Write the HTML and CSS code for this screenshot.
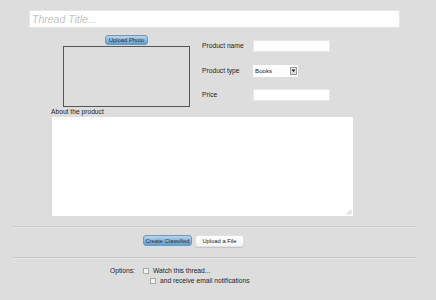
FILE: index.html
```html
<!DOCTYPE html>
<html>
<head>
<meta charset="utf-8">
<link rel="stylesheet" href="styles.css">
</head>
<body>
<div class="page">
  <div class="title-row"><div class="title-input">Thread Title...</div></div>
  <div class="product">
    <div class="photo">
      <div class="btn btn-blue btn-photo">Upload Photo</div>
      <div class="photo-box"></div>
    </div>
    <div class="fields">
      <div class="label">Product name</div>
      <div class="text-input"></div>
      <div class="label">Product type</div>
      <div class="select"><span class="select-value">Books</span><span class="select-arrow"><svg width="5" height="5" viewBox="0 0 5 5"><path d="M0.5 1.5 L4.5 1.5 L2.5 4 Z" fill="#111"/></svg></span></div>
      <div class="label">Price</div>
      <div class="text-input"></div>
    </div>
  </div>
  <div class="about-label">About the product</div>
  <div class="textarea">
    <svg class="grip" width="6" height="6" viewBox="0 0 6 6"><path d="M5.5 1 L1 5.5 M5.5 3.5 L3.5 5.5" stroke="#aaa" stroke-width="0.8"/></svg>
  </div>
  <div class="sep sep-1"></div>
  <div class="actions">
    <div class="btn btn-blue btn-create">Create Classified</div>
    <div class="btn btn-white btn-file">Upload a File</div>
  </div>
  <div class="sep sep-2"></div>
  <div class="options">
    <div class="options-label">Options:</div>
    <div class="option-list">
      <div class="option"><span class="check"></span><span>Watch this thread...</span></div>
      <div class="option sub"><span class="check"></span><span>and receive email notifications</span></div>
    </div>
  </div>
</div>
</body>
</html>
```
FILE: styles.css
```css
html, body {
  margin: 0;
  padding: 0;
  background: #dddddd;
  font-family: "Liberation Sans", Arial, sans-serif;
  font-size: 6.7px;
  color: #1e1e1e;
}
.page {
  width: 436px;
  height: 300px;
  padding-top: 10px;
  box-sizing: border-box;
}
.title-row {
  padding-left: 29px;
}
.title-input {
  width: 371px;
  height: 18px;
  box-sizing: border-box;
  background: #fff;
  border: 1px solid #e6e6e6;
  border-radius: 1px;
  font-style: italic;
  font-size: 10.5px;
  line-height: 16px;
  color: #c4c4c4;
  padding-left: 2px;
}
.product {
  display: flex;
  margin-top: 7px;
  margin-left: 63px;
}
.photo {
  width: 127px;
  display: flex;
  flex-direction: column;
  align-items: center;
}
.btn {
  box-sizing: border-box;
  display: flex;
  align-items: center;
  justify-content: center;
  border-radius: 3px;
  font-size: 5.8px;
  white-space: nowrap;
}
.btn-blue {
  background: linear-gradient(#b9d6ec, #8bb6d8 50%, #6a9cc4);
  border: 1px solid #6d9bbf;
  color: #1d2f45;
}
.btn-white {
  background: linear-gradient(#ffffff, #f3f3f3);
  border: 1px solid #e2e2e2;
  box-shadow: 0 1px 1px rgba(0,0,0,0.12);
  color: #222;
}
.btn-photo {
  width: 43px;
  height: 10px;
}
.photo-box {
  margin-top: 1px;
  width: 127px;
  height: 61px;
  box-sizing: border-box;
  border: 1px solid #555;
}
.fields {
  margin-left: 12px;
  margin-top: 5px;
  display: grid;
  grid-template-columns: 51px 77px;
  grid-auto-rows: 12px;
  row-gap: 12.5px;
  align-items: center;
}
.label {
  line-height: 12px;
}
.text-input {
  height: 12px;
  background: #fff;
  border: 1px solid #e8e8e8;
  box-sizing: border-box;
}
.select {
  width: 45px;
  height: 12px;
  background: #fff;
  box-sizing: border-box;
  display: flex;
  align-items: center;
  justify-content: space-between;
  padding-left: 2px;
  padding-right: 1px;
}
.select-value {
  font-size: 6.2px;
}
.select-arrow {
  width: 7px;
  height: 8px;
  box-sizing: border-box;
  background: linear-gradient(#f4f4f4, #d6d6d6);
  border: 1px solid #999;
  display: flex;
  align-items: center;
  justify-content: center;
}
.select-arrow svg {
  display: block;
}
.about-label {
  margin-top: 1px;
  margin-left: 51px;
  line-height: 8px;
  height: 8px;
}
.textarea {
  position: relative;
  margin-top: 1px;
  margin-left: 52px;
  width: 301px;
  height: 99px;
  background: #fff;
}
.grip {
  position: absolute;
  right: 1px;
  bottom: 1px;
}
.sep {
  margin-left: 13px;
  width: 403px;
  height: 1px;
  background: #c9c9c9;
  border-bottom: 1px solid #e6e6e6;
}
.sep-1 {
  margin-top: 10px;
}
.actions {
  display: flex;
  gap: 3px;
  margin-top: 7px;
  margin-left: 143px;
}
.btn-create {
  width: 49px;
  height: 11px;
}
.btn-file {
  width: 49px;
  height: 12px;
}
.sep-2 {
  margin-top: 10px;
}
.options {
  display: flex;
  margin-top: 8px;
  margin-left: 110px;
}
.options-label {
  width: 33px;
  line-height: 8px;
}
.option-list {
  display: flex;
  flex-direction: column;
  gap: 2px;
}
.option {
  display: flex;
  align-items: center;
  gap: 4px;
  line-height: 8px;
}
.option.sub {
  margin-left: 7px;
}
.check {
  width: 6px;
  height: 6px;
  box-sizing: border-box;
  background: #f2f2f2;
  border: 1px solid #aaa;
}
```
